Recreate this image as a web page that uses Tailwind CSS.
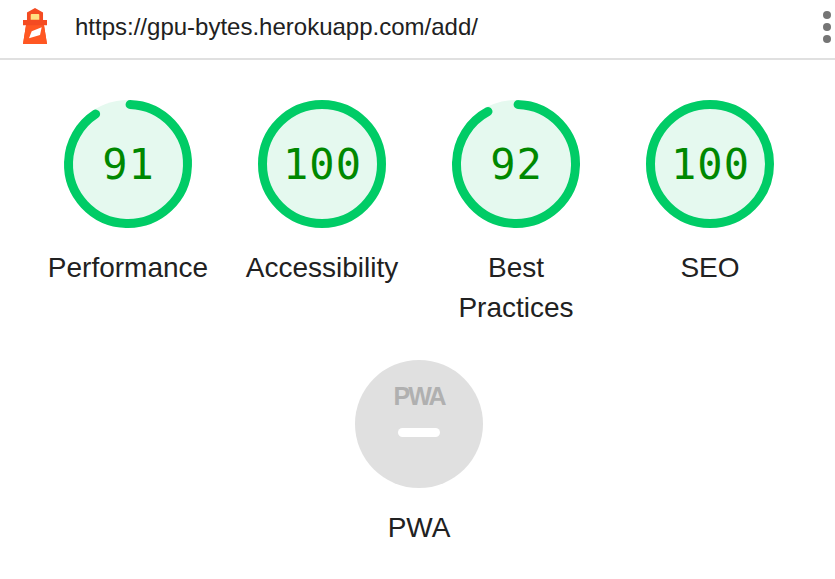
<!DOCTYPE html>
<html lang="en">
<head>
  <meta charset="UTF-8">
  <meta name="viewport" content="width=device-width, initial-scale=1">
  <title>Lighthouse Report</title>
  <script src="https://cdn.jsdelivr.net/npm/@tailwindcss/browser@4"></script>
</head>
<body class="bg-white h-[579px] overflow-hidden font-['Liberation_Sans',sans-serif] text-[#212121]">

  <!-- Top bar -->
  <header class="h-[60px] border-b-2 border-[#e0e0e0] flex items-center pl-[17px] pr-[4px]">
    <svg class="w-[36px] h-[36px] shrink-0 -mt-[6px]" viewBox="0 0 48 48">
      <path fill="#f44b21" d="M13.300 6l10.700-6 10.700 6v10H40v7h-4L40 48H8l4-25H8v-7h5.300V6z"/>
      <path fill="#ff5722" d="M12 23h24l4 25H8z"/>
      <path fill="#ffe082" d="M18.300 9q0-1 1-1h9.400q1 0 1 1v6.600H18.300z"/>
      <path fill="#fff" d="M19.600 31l13.300-5.200-2.200 10.200-14.700 4.400z"/>
    </svg>
    <div class="ml-[22px] text-[24px] leading-none -mt-[4px] text-[#212121]">https://gpu-bytes.herokuapp.com/add/</div>
    <div class="ml-auto flex flex-col gap-[4px] -mt-[4px]">
      <span class="w-[8px] h-[8px] rounded-full bg-[#757575]"></span>
      <span class="w-[8px] h-[8px] rounded-full bg-[#757575]"></span>
      <span class="w-[8px] h-[8px] rounded-full bg-[#757575]"></span>
    </div>
  </header>

  <!-- Scores -->
  <main class="w-[776px] ml-[31px] pt-[40px]">
    <div class="grid grid-cols-4">
      <div class="flex flex-col items-center">
        <div class="relative w-[128px] h-[128px]">
          <svg class="w-full h-full -rotate-[88deg]" viewBox="0 0 128 128">
            <circle cx="64" cy="64" r="64" fill="#e5f9ef"/>
            <circle cx="64" cy="64" r="59.500" fill="none" stroke="#00cc66" stroke-width="9" stroke-linecap="round" stroke-dasharray="337 374"/>
          </svg>
          <div class="absolute inset-0 flex items-center justify-center pl-[1px] font-['DejaVu_Sans_Mono',monospace] text-[42px] tracking-[1px] text-[#008800]">91</div>
        </div>
        <div class="mt-[20px] w-[166px] text-center text-[28px] leading-[40px]">Performance</div>
      </div>
      <div class="flex flex-col items-center">
        <div class="relative w-[128px] h-[128px]">
          <svg class="w-full h-full" viewBox="0 0 128 128">
            <circle cx="64" cy="64" r="64" fill="#e5f9ef"/>
            <circle cx="64" cy="64" r="59.500" fill="none" stroke="#00cc66" stroke-width="9"/>
          </svg>
          <div class="absolute inset-0 flex items-center justify-center pl-[1px] font-['DejaVu_Sans_Mono',monospace] text-[42px] tracking-[1px] text-[#008800]">100</div>
        </div>
        <div class="mt-[20px] w-[166px] text-center text-[28px] leading-[40px]">Accessibility</div>
      </div>
      <div class="flex flex-col items-center">
        <div class="relative w-[128px] h-[128px]">
          <svg class="w-full h-full -rotate-[88deg]" viewBox="0 0 128 128">
            <circle cx="64" cy="64" r="64" fill="#e5f9ef"/>
            <circle cx="64" cy="64" r="59.500" fill="none" stroke="#00cc66" stroke-width="9" stroke-linecap="round" stroke-dasharray="342 374"/>
          </svg>
          <div class="absolute inset-0 flex items-center justify-center pl-[1px] font-['DejaVu_Sans_Mono',monospace] text-[42px] tracking-[1px] text-[#008800]">92</div>
        </div>
        <div class="mt-[20px] w-[166px] text-center text-[28px] leading-[40px]">Best Practices</div>
      </div>
      <div class="flex flex-col items-center">
        <div class="relative w-[128px] h-[128px]">
          <svg class="w-full h-full" viewBox="0 0 128 128">
            <circle cx="64" cy="64" r="64" fill="#e5f9ef"/>
            <circle cx="64" cy="64" r="59.500" fill="none" stroke="#00cc66" stroke-width="9"/>
          </svg>
          <div class="absolute inset-0 flex items-center justify-center pl-[1px] font-['DejaVu_Sans_Mono',monospace] text-[42px] tracking-[1px] text-[#008800]">100</div>
        </div>
        <div class="mt-[20px] w-[166px] text-center text-[28px] leading-[40px]">SEO</div>
      </div>
    </div>

    <!-- PWA -->
    <div class="flex flex-col items-center mt-[32px]">
      <div class="relative w-[128px] h-[128px] rounded-full bg-[#e0e0e0]">
        <div class="absolute left-0 right-0 top-[22px] text-center font-bold text-[25px] leading-[28px] tracking-[-2px] text-[#b0b0b0]">PWA</div>
        <div class="absolute left-[43px] top-[68px] w-[42px] h-[9px] rounded-full bg-white"></div>
      </div>
      <div class="mt-[20px] text-[28px] leading-[40px]">PWA</div>
    </div>
  </main>

</body>
</html>
